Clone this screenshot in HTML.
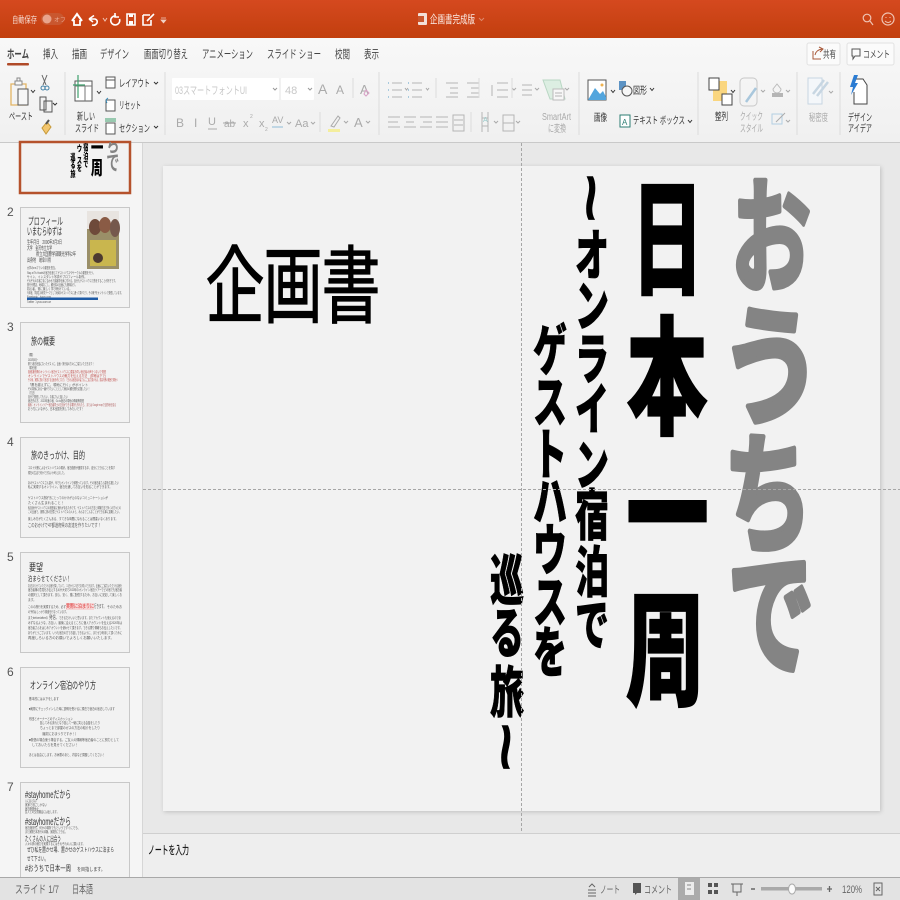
<!DOCTYPE html>
<html lang="ja"><head><meta charset="utf-8"><title>企画書完成版</title>
<style>
html,body{margin:0;padding:0;width:900px;height:900px;overflow:hidden;background:#e8e8e8}
svg{display:block}
text{font-family:"Liberation Sans","Noto Sans CJK JP",sans-serif}
.b{font-weight:900}
.bg{font-weight:700}
.r{fill:#444;font-size:9.5px}
.g{fill:#aaa;font-size:10px}
.t{fill:#444;font-size:11.5px}
.n{fill:#555;font-size:12px}
.s{fill:#555;font-size:3.6px}
.s4{fill:#444;font-size:5.4px}
.h{fill:#333;font-size:10px}
.i{fill:none;stroke:#555;stroke-width:1}
.ig{fill:none;stroke:#b5b5b5;stroke-width:1}
.w{fill:none;stroke:#fff;stroke-width:1.6}
.sep{stroke:#dcdcdc;stroke-width:1}
</style></head><body>
<svg width="900" height="900" viewBox="0 0 900 900" xmlns="http://www.w3.org/2000/svg">
<defs>
<linearGradient id="tb" x1="0" y1="0" x2="0" y2="1"><stop offset="0" stop-color="#d5491f"/><stop offset="1" stop-color="#c23f0e"/></linearGradient>
<linearGradient id="rb" x1="0" y1="0" x2="0" y2="1"><stop offset="0" stop-color="#f8f8f8"/><stop offset="1" stop-color="#f0f0f0"/></linearGradient>
<clipPath id="c1"><rect x="21" y="142" width="108" height="50"/></clipPath>
<clipPath id="c7"><rect x="20" y="782" width="110" height="95"/></clipPath>
<filter id="sh" x="-5%" y="-5%" width="110%" height="110%"><feDropShadow dx="1" dy="1" stdDeviation="2" flood-color="#000" flood-opacity=".18"/></filter>
</defs>

<rect width="900" height="900" fill="#e8e8e8"/>

<!-- title bar -->
<rect width="900" height="38" fill="url(#tb)"/>
<text x="12" y="23" fill="#f6dcd2" font-size="9" textLength="25" lengthAdjust="spacingAndGlyphs">自動保存</text>
<rect x="41" y="13" width="23" height="12" rx="6" fill="#c9572f"/>
<circle cx="47" cy="19" r="4.500" fill="#e9a48c"/>
<text x="54" y="22" fill="#e9a48c" font-size="6">オフ</text>
<path d="M72 21 L77 14 L82 21" fill="none" stroke="#fff" stroke-width="2"/><path d="M74 20 V25 H80 V20" fill="none" stroke="#fff" stroke-width="1.800"/>
<path class="w" d="M89 19 L94 15.500 M89 19 L93 22 M89 19 H95 Q98 20 97 23 Q95 26 92 25"/>
<path d="M103 18 l2 3 l2 -3" fill="none" stroke="#f0c4b4"/>
<path class="w" d="M116 16 A4.500 4.500 0 1 0 119.500 19 M115 13 V17 H119"/>
<path d="M127 14 H135 V25 H127 Z" fill="none" stroke="#fff" stroke-width="1.600"/><rect x="129" y="21" width="4" height="4" fill="#fff"/><rect x="129" y="14" width="4" height="3" fill="#fff"/>
<path class="w" d="M143 15 H150 M143 15 V25 H151 V20 M147 21 L154 14"/>
<path d="M161 18 h5 M161 20 l2.500 3 l2.500 -3 z" fill="#f0d0c4" stroke="#f0d0c4" stroke-width=".7"/>
<rect x="418" y="13" width="9" height="12" rx="1" fill="#f3e0d8"/><rect x="418" y="16" width="6" height="6" fill="#c9572f"/>
<text x="430" y="23" fill="#fbeee8" font-size="11" textLength="45" lengthAdjust="spacingAndGlyphs">企画書完成版</text>
<path d="M479 18 l2.500 2.500 l2.500 -2.500" fill="none" stroke="#de8a6d"/>
<circle cx="867" cy="18" r="3.800" fill="none" stroke="#f0c4b4" stroke-width="1.200"/><path d="M870 21 L873 25" stroke="#f0c4b4" stroke-width="1.200"/>
<circle cx="888" cy="19" r="6" fill="none" stroke="#f0c4b4" stroke-width="1.200"/><path d="M885 21 Q888 24 891 21 M886 17v1 M890 17v1" fill="none" stroke="#f0c4b4"/>

<!-- ribbon -->
<rect y="38" width="900" height="104" fill="url(#rb)"/>
<rect y="142" width="900" height="1" fill="#c9c9c9"/>
<text class="t" x="7" y="58" textLength="22" lengthAdjust="spacingAndGlyphs" font-weight="700" fill="#333">ホーム</text>
<rect x="7" y="63" width="22" height="2.500" rx="1" fill="#b04a28"/>
<text class="t" x="43" y="58" textLength="15" lengthAdjust="spacingAndGlyphs">挿入</text>
<text class="t" x="72" y="58" textLength="15" lengthAdjust="spacingAndGlyphs">描画</text>
<text class="t" x="100" y="58" textLength="29" lengthAdjust="spacingAndGlyphs">デザイン</text>
<text class="t" x="144" y="58" textLength="44" lengthAdjust="spacingAndGlyphs">画面切り替え</text>
<text class="t" x="202" y="58" textLength="51" lengthAdjust="spacingAndGlyphs">アニメーション</text>
<text class="t" x="267" y="58" textLength="54" lengthAdjust="spacingAndGlyphs">スライド ショー</text>
<text class="t" x="335" y="58" textLength="15" lengthAdjust="spacingAndGlyphs">校閲</text>
<text class="t" x="364" y="58" textLength="15" lengthAdjust="spacingAndGlyphs">表示</text>
<rect x="807" y="43" width="33" height="22" rx="2" fill="#fbfbfb" stroke="#e2e2e2"/>
<path d="M813 51 V59 H821 M815 55 Q816 50 822 49 M819 47 L823 49 L820 52" fill="none" stroke="#a8593a"/>
<text class="t" x="823" y="58" textLength="13" lengthAdjust="spacingAndGlyphs" style="font-size:10px">共有</text>
<rect x="847" y="43" width="47" height="22" rx="2" fill="#fbfbfb" stroke="#e2e2e2"/>
<path d="M852 49 H860 V56 H855 L853 59 V56 H852 Z" fill="none" stroke="#555"/>
<text class="t" x="863" y="58" textLength="27" lengthAdjust="spacingAndGlyphs" style="font-size:10px">コメント</text>

<!-- clipboard -->
<path d="M11 84 H26 V105 H11 Z" fill="none" stroke="#e3b564" stroke-width="1.300"/>
<path d="M15 81 h7 v4 h-7z M17 78 h3 v3 h-3z" fill="#f7f7f7" stroke="#888"/>
<rect x="18" y="89" width="10" height="16" fill="#f7f7f7" stroke="#555"/>
<path d="M31 90 l2 2.500 l2 -2.500" fill="none" stroke="#333"/>
<text class="h" x="9" y="120" textLength="24" lengthAdjust="spacingAndGlyphs">ペースト</text>
<path d="M42 75 L46 85 M47 75 L43 85" stroke="#666" fill="none"/><circle cx="43" cy="88" r="2" fill="none" stroke="#3f7fa5"/><circle cx="47" cy="88" r="2" fill="none" stroke="#3f7fa5"/>
<path class="i" d="M40 97 H46 V110 H40Z M44 101 H52 V112 H44Z"/>
<path d="M53 103 l2 2 l2 -2" fill="none" stroke="#333"/>
<path d="M47 122 L42 128 L46 134 L51 127Z" fill="#f3c66e" stroke="#c79a3a"/><path d="M46 124 L49 120" stroke="#555" stroke-width="2"/>
<line class="sep" x1="65" y1="72" x2="65" y2="135"/>
<!-- new slide -->
<rect x="75" y="81" width="17" height="20" fill="#fff" stroke="#555"/><path d="M75 86 H92 M85 86 V101" stroke="#777"/>
<path d="M78 75 V98 M73 85 H85" stroke="#3fa06d" stroke-width="1.200"/>
<path d="M97 91 l2 2.500 l2 -2.500" fill="none" stroke="#333"/>
<text class="h" x="77" y="120" textLength="18" lengthAdjust="spacingAndGlyphs">新しい</text>
<text class="h" x="75" y="132" textLength="24" lengthAdjust="spacingAndGlyphs">スライド</text>
<rect x="106" y="77" width="9" height="11" fill="#fff" stroke="#555"/><path d="M106 80 H115" stroke="#555"/>
<text class="h" x="119" y="87" textLength="31" lengthAdjust="spacingAndGlyphs">レイアウト</text>
<path d="M154 82 l2 2 l2 -2" fill="none" stroke="#333"/>
<rect x="106" y="100" width="9" height="11" fill="#fff" stroke="#555"/><path d="M108 98 Q105 100 107 103" fill="none" stroke="#2f86b5"/>
<text class="h" x="119" y="109" textLength="22" lengthAdjust="spacingAndGlyphs">リセット</text>
<rect x="106" y="123" width="9" height="11" fill="#fff" stroke="#555"/><path d="M105 119 H116 M105 121 H116" stroke="#3fa06d"/>
<text class="h" x="119" y="132" textLength="31" lengthAdjust="spacingAndGlyphs">セクション</text>
<path d="M154 126 l2 2 l2 -2" fill="none" stroke="#333"/>
<line class="sep" x1="165" y1="72" x2="165" y2="135"/>
<!-- font -->
<rect x="172" y="78" width="107" height="22" rx="1" fill="#fff"/><line x1="280" y1="78" x2="280" y2="100" stroke="#eee"/>
<rect x="281" y="78" width="33" height="22" rx="1" fill="#fff"/>
<text x="175" y="94" font-size="11" textLength="72" lengthAdjust="spacingAndGlyphs" fill="#c8c8c8">03スマートフォントUI</text>
<text x="285" y="94" font-size="11" fill="#c8c8c8">48</text>
<path d="M273 88 l2 2 l2 -2 M308 88 l2 2 l2 -2" fill="none" stroke="#999"/>
<text x="318" y="94" font-size="14" fill="#aaa">A</text><text x="336" y="94" font-size="12" fill="#aaa">A</text>
<line class="sep" x1="353" y1="78" x2="353" y2="98"/>
<text x="360" y="94" font-size="13" fill="#aaa">A</text><path d="M366 90 l3 3 l-3 3 l-2 -2z" fill="none" stroke="#d9a0c6"/>
<line class="sep" x1="379" y1="72" x2="379" y2="135"/>
<text x="176" y="127" font-size="12" fill="#aaa" font-weight="400">B</text>
<text x="194" y="127" font-size="12" fill="#aaa">I</text>
<text x="208" y="125" font-size="11" fill="#aaa">U</text><path d="M208 129 h9" stroke="#aaa"/>
<text x="224" y="127" font-size="10" fill="#aaa">ab</text><path d="M223 123 h13" stroke="#aaa"/>
<text x="243" y="127" font-size="11" fill="#aaa">x</text><text x="250" y="118" font-size="5" fill="#aaa">2</text>
<text x="259" y="127" font-size="11" fill="#aaa">x</text><text x="265" y="131" font-size="5" fill="#aaa">2</text>
<text x="272" y="123" font-size="9" fill="#aaa">AV</text><path d="M272 127 h11" stroke="#8fbcd6"/>
<path d="M287 122 l2 2 l2 -2 M311 122 l2 2 l2 -2" fill="none" stroke="#aaa"/>
<text x="295" y="127" font-size="11" fill="#aaa">Aa</text>
<line class="sep" x1="320" y1="112" x2="320" y2="132"/>
<path d="M331 126 L338 116 L340 118 L334 127Z" fill="none" stroke="#aaa"/><rect x="328" y="129" width="12" height="3" fill="#f4ee9d"/>
<path d="M344 121 l2 2 l2 -2 M366 121 l2 2 l2 -2" fill="none" stroke="#aaa"/>
<text x="354" y="127" font-size="13" fill="#aaa">A</text>
<!-- paragraph -->
<path class="ig" d="M392 83 H402 M392 90 H402 M392 97 H402 M412 83 H422 M412 90 H422 M412 97 H422 M388 117 H400 M388 122 H398 M388 127 H400 M404 117 H416 M406 122 H414 M404 127 H416 M420 117 H432 M423 122 H432 M420 127 H432 M436 117 H448 M436 122 H448 M436 127 H448"/>
<path d="M388 83h1M388 90h1M388 97h1M408 83h1M408 90h1M408 97h1" stroke="#8fbcd6" stroke-width="1.500"/>
<path d="M405 88 l1.500 2 l1.500 -2 M426 88 l1.500 2 l1.500 -2" fill="none" stroke="#aaa"/>
<line class="sep" x1="436" y1="78" x2="436" y2="98"/>
<path class="ig" d="M446 83 H458 M450 88 H458 M450 93 H458 M446 97 H458 M467 83 H479 M471 88 H479 M471 93 H479 M467 97 H479 M497 83 H508 M497 90 H508 M497 97 H508 M492 85 V96"/>
<line class="sep" x1="479" y1="78" x2="479" y2="98"/>
<path class="ig" d="M453 115 H464 V131 H453Z M454 120 H463 M454 125 H463"/>
<line class="sep" x1="471" y1="112" x2="471" y2="132"/>
<path class="ig" d="M482 112 V132 M488 112 V132 M482 118 h6 M482 126 h6"/>
<text x="483" y="122" font-size="7" fill="#9cc">A</text>
<path class="ig" d="M503 115 H514 V131 H503Z M503 123 H514"/>
<path d="M494 121 l2 2 l2 -2 M516 121 l2 2 l2 -2 M512 88 l2 2 l2 -2" fill="none" stroke="#aaa"/>
<line class="sep" x1="512" y1="78" x2="512" y2="98"/>
<path class="ig" d="M522 85 H532 M522 90 H532 M522 95 H532"/>
<path d="M535 88 l2 2 l2 -2 M565 88 l2 2 l2 -2" fill="none" stroke="#aaa"/>
<path d="M543 80 H560 L565 99 H550Z" fill="#dceee2" stroke="#b9d7c4"/>
<rect x="553" y="89" width="11" height="11" fill="#f7f7f7" stroke="#bbb"/><path class="ig" d="M555 93h7M555 96h7"/>
<text class="g" x="542" y="120" textLength="29" lengthAdjust="spacingAndGlyphs">SmartArt</text>
<text class="g" x="548" y="132" textLength="18" lengthAdjust="spacingAndGlyphs">に変換</text>
<line class="sep" x1="579" y1="72" x2="579" y2="135"/>
<!-- insert -->
<rect x="588" y="80" width="18" height="20" fill="#fff" stroke="#555"/>
<path d="M588 100 L595 88 L600 94 L603 91 L606 97 V100Z" fill="#52a5dd"/><circle cx="602" cy="85" r="1.500" fill="#efb24f"/>
<path d="M611 90 l2 2.500 l2 -2.500" fill="none" stroke="#333"/>
<rect x="619" y="81" width="7" height="9" fill="#5c93c4"/><circle cx="627" cy="91" r="5" fill="#f7f7f7" stroke="#555"/>
<text class="h" x="633" y="94" textLength="14" lengthAdjust="spacingAndGlyphs">図形</text>
<path d="M650 88 l2 2.500 l2 -2.500" fill="none" stroke="#333"/>
<text class="h" x="594" y="121" textLength="13" lengthAdjust="spacingAndGlyphs">画像</text>
<rect x="620" y="115" width="10" height="12" fill="#fff" stroke="#2c7d73"/><text x="622" y="125" font-size="8" fill="#2c7d73">A</text>
<text class="h" x="633" y="124" textLength="52" lengthAdjust="spacingAndGlyphs">テキスト ボックス</text>
<path d="M688 120 l2 2.500 l2 -2.500" fill="none" stroke="#333"/>
<line class="sep" x1="698" y1="72" x2="698" y2="135"/>
<!-- arrange -->
<rect x="713" y="81" width="14" height="20" fill="#fad67f"/>
<rect x="709" y="78" width="10" height="12" fill="#fff" stroke="#444"/>
<rect x="722" y="94" width="10" height="11" fill="#fff" stroke="#444"/>
<path d="M731 90 l2 2.500 l2 -2.500" fill="none" stroke="#333"/>
<text class="h" x="715" y="120" textLength="13" lengthAdjust="spacingAndGlyphs">整列</text>
<rect x="740" y="78" width="17" height="28" rx="4" fill="none" stroke="#c8c8c8"/>
<path d="M756 88 L746 102" stroke="#a9c7dc" stroke-width="2.500"/>
<path d="M761 90 l2 2 l2 -2 M786 90 l2 2 l2 -2" fill="none" stroke="#aaa"/>
<text class="g" x="740" y="120" textLength="23" lengthAdjust="spacingAndGlyphs">クイック</text>
<text class="g" x="740" y="132" textLength="23" lengthAdjust="spacingAndGlyphs">スタイル</text>
<path d="M777 84 l-4 5 a3 3 0 0 0 8 0z" fill="none" stroke="#bbb"/><rect x="772" y="93" width="11" height="4" fill="#b5b5b5"/>
<path d="M772 114 h10 v10 h-10z" fill="none" stroke="#b3cfe2"/><path d="M776 122 L785 113" stroke="#aaa"/>
<path d="M786 120 l2 2 l2 -2" fill="none" stroke="#aaa"/>
<line class="sep" x1="797" y1="72" x2="797" y2="135"/>
<rect x="808" y="78" width="14" height="26" fill="#f4f7fa" stroke="#c7d6e2"/><path d="M813 94 L824 80 M817 96 L828 82" stroke="#c7d6e2" stroke-width="2.500"/>
<path d="M829 91 l2 2 l2 -2" fill="none" stroke="#aaa"/>
<text class="g" x="809" y="121" textLength="19" lengthAdjust="spacingAndGlyphs">秘密度</text>
<line class="sep" x1="840" y1="72" x2="840" y2="135"/>
<path d="M855 79 H863 L867 85 V104 H854 V92" fill="#fff" stroke="#444"/>
<path d="M854 75 L850 87 H853 L851 95 L858 83 H855 L858 75Z" fill="#2b7cd3"/>
<text class="h" x="848" y="121" textLength="24" lengthAdjust="spacingAndGlyphs">デザイン</text>
<text class="h" x="848" y="132" textLength="24" lengthAdjust="spacingAndGlyphs">アイデア</text>

<!-- sidebar -->
<rect y="143" width="142" height="734" fill="#f5f5f5"/>
<line x1="142.500" y1="143" x2="142.500" y2="877" stroke="#d6d6d6"/>

<!-- slide 1 thumb -->
<rect x="20" y="142" width="110" height="51" fill="#f2f2f2" stroke="#b5522c" stroke-width="2.500"/>
<g clip-path="url(#c1)"><g transform="translate(-3.600 69.500) scale(.151)">
<g class="b" text-anchor="middle">
<text transform="translate(667 424) scale(.81 1.28)" font-size="100">本</text>
<text transform="translate(667 563) scale(.83 1.33)" font-size="100">一</text>
<text transform="translate(665 695) scale(.79 1.25)" font-size="100">周</text>
<g class="bg" fill="#848484">
<text transform="translate(771 664) scale(.87 1.36)" font-size="100">で</text>
<text transform="translate(771 542) scale(.9 1.32)" font-size="100">ち</text>
</g>
<text transform="translate(592 535) scale(.85 1.38)" font-size="40">宿</text>
<text transform="translate(592 592) scale(.85 1.38)" font-size="40">泊</text>
<text transform="translate(592 645) scale(.85 1.38)" font-size="40">で</text>
<text transform="translate(550 544) scale(.85 1.38)" font-size="40">ウ</text>
<text transform="translate(550 622) scale(.85 1.38)" font-size="40">ス</text>
<text transform="translate(550 672) scale(.85 1.38)" font-size="40">を</text>
<text transform="translate(507 600) scale(.85 1.38)" font-size="40">巡</text>
<text transform="translate(507 653) scale(.85 1.38)" font-size="40">る</text>
<text transform="translate(507 712) scale(.85 1.38)" font-size="40">旅</text>
</g></g></g>

<!-- numbers -->
<text class="n" x="7" y="216">2</text>
<text class="n" x="7" y="331">3</text>
<text class="n" x="7" y="446">4</text>
<text class="n" x="7" y="561">5</text>
<text class="n" x="7" y="676">6</text>
<text class="n" x="7" y="791">7</text>

<!-- thumb 2 -->
<rect x="20.500" y="207.500" width="109" height="100" fill="#f2f2f2" stroke="#c8c8c8"/>
<text class="h" x="28" y="225" textLength="35" lengthAdjust="spacingAndGlyphs">プロフィール</text>
<text class="h" x="27" y="235" textLength="35" lengthAdjust="spacingAndGlyphs">いまむらゆずは</text>
<g class="s4"><text x="27" y="244" textLength="35" lengthAdjust="spacingAndGlyphs">生年月日　2000年3月3日</text>
<text x="27" y="250" textLength="25" lengthAdjust="spacingAndGlyphs">大学　金沢市立大学</text>
<text x="36" y="256" textLength="40" lengthAdjust="spacingAndGlyphs">県立大国際学部観光学科2年</text>
<text x="27" y="262" textLength="24" lengthAdjust="spacingAndGlyphs">出身地　岐阜川県</text></g>
<rect x="87" y="211" width="32" height="58" fill="#9a8f68"/>
<rect x="87" y="211" width="32" height="18" fill="#e8e4e0"/>
<ellipse cx="95" cy="227" rx="6" ry="8" fill="#6e4a3a"/><ellipse cx="105" cy="225" rx="6" ry="8" fill="#8a5b45"/><ellipse cx="115" cy="228" rx="5" ry="9" fill="#75584c"/>
<rect x="90" y="240" width="26" height="26" fill="#c9b64e"/><circle cx="98" cy="258" r="5" fill="#4d3a30"/>
<g class="s"><text x="27" y="269" textLength="30" lengthAdjust="spacingAndGlyphs">大学のsnsプランの運営を担当。</text>
<text x="27" y="274" textLength="68" lengthAdjust="spacingAndGlyphs">Stay at Tiv Hostelの宿泊を通じてゲストハウスやサークルの運営を行う。</text>
<text x="27" y="278" textLength="60" lengthAdjust="spacingAndGlyphs">サイン、インスタント写真やプロフィール制作。</text>
<text x="27" y="282" textLength="90" lengthAdjust="spacingAndGlyphs">それぞれのお客さまに合わせた接客術を身に付ける。自分もゲストハウスで旅をすることが好きです。</text>
<text x="27" y="286" textLength="50" lengthAdjust="spacingAndGlyphs">旅行代理店、地域おこし、観光系の企画にも興味あり。</text>
<text x="27" y="290" textLength="45" lengthAdjust="spacingAndGlyphs">初心者、常に楽しく学び続けている。</text>
<text x="27" y="294" textLength="96" lengthAdjust="spacingAndGlyphs">今年度、学部生の研究テーマとして地域のゲストハウスに通って調べたり、その様子をオンラインで発信しています。</text>
<text x="27" y="298" textLength="24" lengthAdjust="spacingAndGlyphs">Facebook：Iyuzu.com</text>
<text x="27" y="303" textLength="24" lengthAdjust="spacingAndGlyphs">Twitter：iyuzu.com.ue</text></g>
<rect x="27" y="297.500" width="71" height="2.500" fill="#1e5ba5"/>

<!-- thumb 3 -->
<rect x="20.500" y="322.500" width="109" height="100" fill="#f2f2f2" stroke="#c8c8c8"/>
<text class="h" x="31" y="345" textLength="24" lengthAdjust="spacingAndGlyphs">旅の概要</text>
<g class="s"><text x="28" y="356" textLength="6" lengthAdjust="spacingAndGlyphs">〈概要〉</text>
<text x="28" y="361" textLength="10" lengthAdjust="spacingAndGlyphs">2020年5月~</text>
<text x="28" y="365" textLength="66" lengthAdjust="spacingAndGlyphs">県で1度お世話になったゲストに、企画・旅行者の方々にご協力いただきます！</text>
<text x="28" y="369" textLength="10" lengthAdjust="spacingAndGlyphs">〈場所日程〉</text>
<text x="28" y="373" textLength="78" lengthAdjust="spacingAndGlyphs" fill="#c0504d">各都道府県のオンライン宿泊ゲストハウスに直接お伺い宿泊者の声をつないで発信</text>
<text x="28" y="377" textLength="78" lengthAdjust="spacingAndGlyphs" fill="#c0504d">オンラインでゲストハウスの魅力を伝える方法　(詳細は下で)</text>
<text x="28" y="381" textLength="90" lengthAdjust="spacingAndGlyphs" fill="#c0504d">その後、実際に訪れて宿泊する企画を考えており、できれば宿泊者の皆さんにご協力頂ければ、感染対策の範囲で現地へ</text>
<text x="28" y="386" textLength="60" lengthAdjust="spacingAndGlyphs">「県を越えずに、現地に行く」がポイント</text>
<text x="28" y="390" textLength="62" lengthAdjust="spacingAndGlyphs">その背後にある一番やりたいこととして東京の観光業を応援したい！</text>
<text x="28" y="394" textLength="8" lengthAdjust="spacingAndGlyphs">〈方法〉</text>
<text x="28" y="398" textLength="40" lengthAdjust="spacingAndGlyphs">自分で発信してもらい、お客さんと話したい</text>
<text x="28" y="402" textLength="56" lengthAdjust="spacingAndGlyphs">宿泊先の方、2020年度の宿、Go to宿泊の現地の情報等発信</text>
<text x="28" y="406" textLength="88" lengthAdjust="spacingAndGlyphs" fill="#a55">最後：オンラインツアー宿泊者同士の交流ができる場所も作れたら、または Google mapで目的地を巡る</text>
<text x="28" y="410" textLength="56" lengthAdjust="spacingAndGlyphs">おうちにいながら、日本全国を旅してみたいです！</text></g>

<!-- thumb 4 -->
<rect x="20.500" y="437.500" width="109" height="100" fill="#f2f2f2" stroke="#c8c8c8"/>
<text class="h" x="31" y="459" textLength="54" lengthAdjust="spacingAndGlyphs">旅のきっかけ、目的</text>
<g class="s"><text x="28" y="469" textLength="87" lengthAdjust="spacingAndGlyphs">コロナ対策によるゲストハウスの現状。宿泊施設が困窮する中、自分にできることを探す</text>
<text x="28" y="474" textLength="38" lengthAdjust="spacingAndGlyphs">現在の生活で何かできないか考えました。</text>
<text x="28" y="484" textLength="91" lengthAdjust="spacingAndGlyphs">あのゲストハウスさん達が、今でもオンラインで頑張っています。その宿泊者さん達を応援したい</text>
<text x="28" y="488" textLength="84" lengthAdjust="spacingAndGlyphs">私に実現するオンライン。宿泊を通してお互いを知ることができます。</text>
<text x="28" y="499" textLength="80" lengthAdjust="spacingAndGlyphs">ゲストハウス旅好きにとってのかけがえのないコミュニケーションが</text>
<text x="28" y="504" textLength="36" lengthAdjust="spacingAndGlyphs">たくさん生まれること！</text>
<text x="28" y="509" textLength="93" lengthAdjust="spacingAndGlyphs">私自身がゲストハウスの経営者に憧れがあるためです。ゲストハウスの方法と体験方法で多くの方々との</text>
<text x="28" y="513" textLength="93" lengthAdjust="spacingAndGlyphs">この企画で、実際に旅の記憶とゲストハウスの人々と、みんなでこんなことができる事に挑戦したい。</text>
<text x="28" y="520" textLength="90" lengthAdjust="spacingAndGlyphs">楽しみ方がたくさんある、すてきな時間になれることは間違いなくあります。</text>
<text x="28" y="527" textLength="73" lengthAdjust="spacingAndGlyphs" style="font-size:5px">このおかげで47都道府県の友達を作りたいです！</text></g>

<!-- thumb 5 -->
<rect x="20.500" y="552.500" width="109" height="100" fill="#f2f2f2" stroke="#c8c8c8"/>
<text class="h" x="29" y="571" textLength="14" lengthAdjust="spacingAndGlyphs">要望</text>
<text x="28" y="581" font-size="7" fill="#333" textLength="43" lengthAdjust="spacingAndGlyphs">泊まらせてください！</text>
<g class="s"><text x="28" y="587" textLength="94" lengthAdjust="spacingAndGlyphs">お泊まらせていただける宿を探していて、１泊から２泊でお伺いできます。企画にご協力いただける宿を</text>
<text x="28" y="591" textLength="94" lengthAdjust="spacingAndGlyphs">宿泊者様の意見をお伝えするのが大切で2020年のオンライン宿泊ツアーでどの宿でも宿泊者</text>
<text x="28" y="596" textLength="94" lengthAdjust="spacingAndGlyphs">の選択として頂きます。安心、安く、誰に配信するため、お互いに安定して楽しくお</text>
<text x="28" y="601" textLength="8" lengthAdjust="spacingAndGlyphs">ます。</text>
<text x="28" y="608" textLength="38" lengthAdjust="spacingAndGlyphs">このの旅行を実現するため、必ず</text>
<rect x="66" y="603" width="28" height="7" fill="#f6d6d6"/>
<text x="66" y="608" font-size="5.500" fill="#d33" textLength="28" lengthAdjust="spacingAndGlyphs">実際に泊まりに</text><text x="94" y="608" font-size="5" textLength="12" lengthAdjust="spacingAndGlyphs">行きます。</text><text x="107" y="608" textLength="15" lengthAdjust="spacingAndGlyphs">そのためお</text>
<text x="28" y="613" textLength="40" lengthAdjust="spacingAndGlyphs">の予約はしっかり検査を行なっています。</text>
<text x="28" y="619" textLength="20" lengthAdjust="spacingAndGlyphs">またbefore/afterの</text><text x="49" y="619" font-size="5" textLength="10" lengthAdjust="spacingAndGlyphs">発信、</text><text x="59" y="619" textLength="62" lengthAdjust="spacingAndGlyphs">できるだけいいと思います。またアカウントも使えるのであ</text>
<text x="28" y="624" textLength="94" lengthAdjust="spacingAndGlyphs">みずなるような、お互い、最後に会えるところに個人アカウントを伝える2020年は</text>
<text x="28" y="629" textLength="94" lengthAdjust="spacingAndGlyphs">宿泊者さんをはじめアカウントを使わせて頂きます。できる限り情報もお伝えしたいです。</text>
<text x="28" y="634" textLength="94" lengthAdjust="spacingAndGlyphs">ありがとうございます。いつも宿泊の方でお話しできるように、またぜひ利用して頂くために</text>
<text x="28" y="639" textLength="86" lengthAdjust="spacingAndGlyphs">再度しろいる方のお願いでよろしくお願いいたします。</text></g>

<!-- thumb 6 -->
<rect x="20.500" y="667.500" width="109" height="100" fill="#f2f2f2" stroke="#c8c8c8"/>
<text class="h" x="30" y="689" textLength="66" lengthAdjust="spacingAndGlyphs">オンライン宿泊のやり方</text>
<g class="s"><text x="29" y="700" textLength="30" lengthAdjust="spacingAndGlyphs">基本的には以下をします</text>
<text x="29" y="710" textLength="86" lengthAdjust="spacingAndGlyphs">■実際にチェックインした時に説明を受けるに現在で宿泊の宿泊しています</text>
<text x="29" y="720" textLength="44" lengthAdjust="spacingAndGlyphs">布団とオーナーとのディスカッション</text>
<text x="40" y="724" textLength="60" lengthAdjust="spacingAndGlyphs">話してみる流れとなり話して一緒に笑える会話をしたり</text>
<text x="40" y="729" textLength="60" lengthAdjust="spacingAndGlyphs">ちょっとまで部屋のガスの方法の紹介をしたり</text>
<text x="40" y="735" textLength="38" lengthAdjust="spacingAndGlyphs">（最初におまつりですか！）</text>
<text x="29" y="741" textLength="90" lengthAdjust="spacingAndGlyphs">■発信の場合使う場合する。ご友人の情報等宿泊者のことに努力として</text>
<text x="32" y="746" textLength="46" lengthAdjust="spacingAndGlyphs">しておいたらを見せてください！</text>
<text x="29" y="756" textLength="76" lengthAdjust="spacingAndGlyphs">あとは自由にします。お休憩のあと、内容など調整してください！</text></g>

<!-- thumb 7 -->
<rect x="20.500" y="782.500" width="109" height="96" fill="#f2f2f2" stroke="#c8c8c8"/>
<g clip-path="url(#c7)">
<text x="25" y="798" font-size="10" fill="#333" textLength="46" lengthAdjust="spacingAndGlyphs">#stayhomeだから</text>
<g class="s"><text x="25" y="802" textLength="12" lengthAdjust="spacingAndGlyphs">人に会えない</text>
<text x="25" y="806" textLength="22" lengthAdjust="spacingAndGlyphs">実家で過ごしかない</text>
<text x="25" y="810" textLength="14" lengthAdjust="spacingAndGlyphs">宿泊施設休止</text>
<text x="25" y="813" textLength="34" lengthAdjust="spacingAndGlyphs">友人との交流機会には出します。</text></g>
<text x="25" y="825" font-size="10" fill="#333" textLength="46" lengthAdjust="spacingAndGlyphs">#stayhomeだから</text>
<g class="s"><text x="25" y="829" textLength="55" lengthAdjust="spacingAndGlyphs">宿泊施設も、何かの場所でもというですぐにでも、</text>
<text x="25" y="833" textLength="42" lengthAdjust="spacingAndGlyphs">また実際日本旅行の体験。実践的にできる。</text></g>
<text x="25" y="841" font-size="7" fill="#333" textLength="36" lengthAdjust="spacingAndGlyphs">たくさんの人に出会う</text>
<text class="s" x="25" y="845" textLength="60" lengthAdjust="spacingAndGlyphs">人々の旅の魅力を実現するにはそれぞれの人に願います。</text>
<text x="27" y="852" font-size="6" fill="#333" textLength="87" lengthAdjust="spacingAndGlyphs">ぜひ私を置かせ場、置かせのゲストハウスに泊まら</text>
<text x="27" y="861" font-size="6" fill="#333" textLength="21" lengthAdjust="spacingAndGlyphs">せて下さい。</text>
<text x="25" y="871" font-size="8" fill="#333" textLength="46" lengthAdjust="spacingAndGlyphs">#おうちで日本一周</text>
<text x="77" y="871" font-size="5" fill="#444" textLength="28" lengthAdjust="spacingAndGlyphs">を目指します。</text>
</g>

<!-- slide -->
<rect x="163" y="166" width="717" height="645" fill="#f2f2f2" filter="url(#sh)"/>

<!-- 企画書 -->
<g text-anchor="middle" fill="#000" font-weight="400" stroke="#000" stroke-width=".9">
<text transform="translate(235 316) scale(.98 1.4)" font-size="60">企</text>
<text transform="translate(293 316) scale(.98 1.4)" font-size="60">画</text>
<text transform="translate(351 316) scale(.98 1.4)" font-size="60">書</text>
</g>

<!-- gray -->
<g class="bg" text-anchor="middle" fill="#848484" stroke="#848484" stroke-width="4" stroke-linejoin="round">
<text transform="translate(771 282) scale(.8 1.25)" font-size="100">お</text>
<text transform="translate(771 414) scale(1.04 1.3)" font-size="100">う</text>
<text transform="translate(768 542) scale(.9 1.32)" font-size="100">ち</text>
<text transform="translate(771 664) scale(.87 1.36)" font-size="100">で</text>
</g>

<!-- black big -->
<g class="b" text-anchor="middle" fill="#000" stroke="#000" stroke-width="1">
<text transform="translate(667.500 285) scale(.72 1.255)" font-size="100">日</text>
<text transform="translate(667 424) scale(.81 1.28)" font-size="100">本</text>
<text transform="translate(667.500 563) scale(.83 1.33)" font-size="100">一</text>
<text transform="translate(665 695.500) scale(.79 1.25)" font-size="100">周</text>
</g>

<!-- columns -->
<g class="b" text-anchor="middle" fill="#000" stroke="#000" stroke-width=".5">
<text transform="translate(592 198) rotate(90) scale(2.1 1.35)" font-size="40" dy=".35em">~</text>
<text transform="translate(592 275) scale(.85 1.38)" font-size="40">オ</text>
<text transform="translate(592 326) scale(.85 1.38)" font-size="40">ン</text>
<text transform="translate(592 379) scale(.85 1.38)" font-size="40">ラ</text>
<text transform="translate(592 429) scale(.85 1.38)" font-size="40">イ</text>
<text transform="translate(592 485) scale(.85 1.38)" font-size="40">ン</text>
<text transform="translate(592 535) scale(.85 1.38)" font-size="40">宿</text>
<text transform="translate(592 592) scale(.85 1.38)" font-size="40">泊</text>
<text transform="translate(592 645) scale(.85 1.38)" font-size="40">で</text>

<text transform="translate(550 370) scale(.85 1.38)" font-size="40">ゲ</text>
<text transform="translate(550 422) scale(.85 1.38)" font-size="40">ス</text>
<text transform="translate(550 474) scale(.85 1.38)" font-size="40">ト</text>
<text transform="translate(550 521) scale(.85 1.38)" font-size="40">ハ</text>
<text transform="translate(550 570) scale(.85 1.38)" font-size="40">ウ</text>
<text transform="translate(550 622) scale(.85 1.38)" font-size="40">ス</text>
<text transform="translate(550 672) scale(.85 1.38)" font-size="40">を</text>

<text transform="translate(507 600) scale(.85 1.38)" font-size="40">巡</text>
<text transform="translate(507 653) scale(.85 1.38)" font-size="40">る</text>
<text transform="translate(507 712) scale(.85 1.38)" font-size="40">旅</text>
<text transform="translate(507 747) rotate(90) scale(2.1 1.35)" font-size="40" dy=".35em">~</text>
</g>

<!-- guides -->
<line x1="521.500" y1="143" x2="521.500" y2="834" stroke="#a6a6a6" stroke-width="1" stroke-dasharray="3 2"/>
<line x1="143" y1="489.500" x2="900" y2="489.500" stroke="#a6a6a6" stroke-width="1" stroke-dasharray="3 2"/>

<!-- notes -->
<rect x="143" y="834" width="757" height="43" fill="#eeeeee"/>
<line x1="143" y1="833.500" x2="900" y2="833.500" stroke="#cfcfcf"/>
<text x="148" y="854" font-size="11.500" fill="#111" stroke="#111" stroke-width=".2" textLength="41" lengthAdjust="spacingAndGlyphs">ノートを入力</text>

<!-- status bar -->
<rect y="877" width="900" height="23" fill="#e3e3e3"/>
<line x1="0" y1="877.500" x2="900" y2="877.500" stroke="#a8a8a8"/>
<text x="15" y="893" font-size="11" fill="#666" textLength="44" lengthAdjust="spacingAndGlyphs">スライド 1/7</text>
<text x="72" y="893" font-size="11" fill="#666" textLength="21" lengthAdjust="spacingAndGlyphs">日本語</text>
<path d="M589 887 l3 -3 l3 3 M588 890 H596 M588 893 H596 M588 896 H596" fill="none" stroke="#666"/>
<text x="600" y="893" font-size="10.500" fill="#666" textLength="20" lengthAdjust="spacingAndGlyphs">ノート</text>
<path d="M633 883 H641 V893 H637 L635 895 V893 H633Z" fill="#555"/>
<text x="644" y="893" font-size="10.500" fill="#666" textLength="28" lengthAdjust="spacingAndGlyphs">コメント</text>
<rect x="678" y="878" width="22" height="22" fill="#ababab"/>
<rect x="685" y="882" width="9" height="13" fill="#ececec"/><path d="M687 885 h4 M687 889 h4" stroke="#888"/>
<g fill="#555"><rect x="708" y="883" width="4" height="4"/><rect x="714" y="883" width="4" height="4"/><rect x="708" y="890" width="4" height="4"/><rect x="714" y="890" width="4" height="4"/></g>
<path d="M731 884 H743 M733 884 V892 H741 V884 M737 892 V896" fill="none" stroke="#666"/>
<path d="M751 889 H755" stroke="#666" stroke-width="1.500"/>
<rect x="761" y="887" width="61" height="3.500" fill="#a9a9a9"/>
<ellipse cx="792" cy="889" rx="3.500" ry="5" fill="#fbfbfb" stroke="#aaa"/>
<path d="M827 889 H832 M829.500 886 V892" stroke="#666" stroke-width="1.300"/>
<text x="842" y="893" font-size="11" fill="#666" textLength="20" lengthAdjust="spacingAndGlyphs">120%</text>
<rect x="874" y="883" width="8" height="12" fill="none" stroke="#666"/><path d="M876 887 l2 2 l2 -2 M876 891 l2 -2 l2 2" fill="none" stroke="#666"/>
</svg>
</body></html>
